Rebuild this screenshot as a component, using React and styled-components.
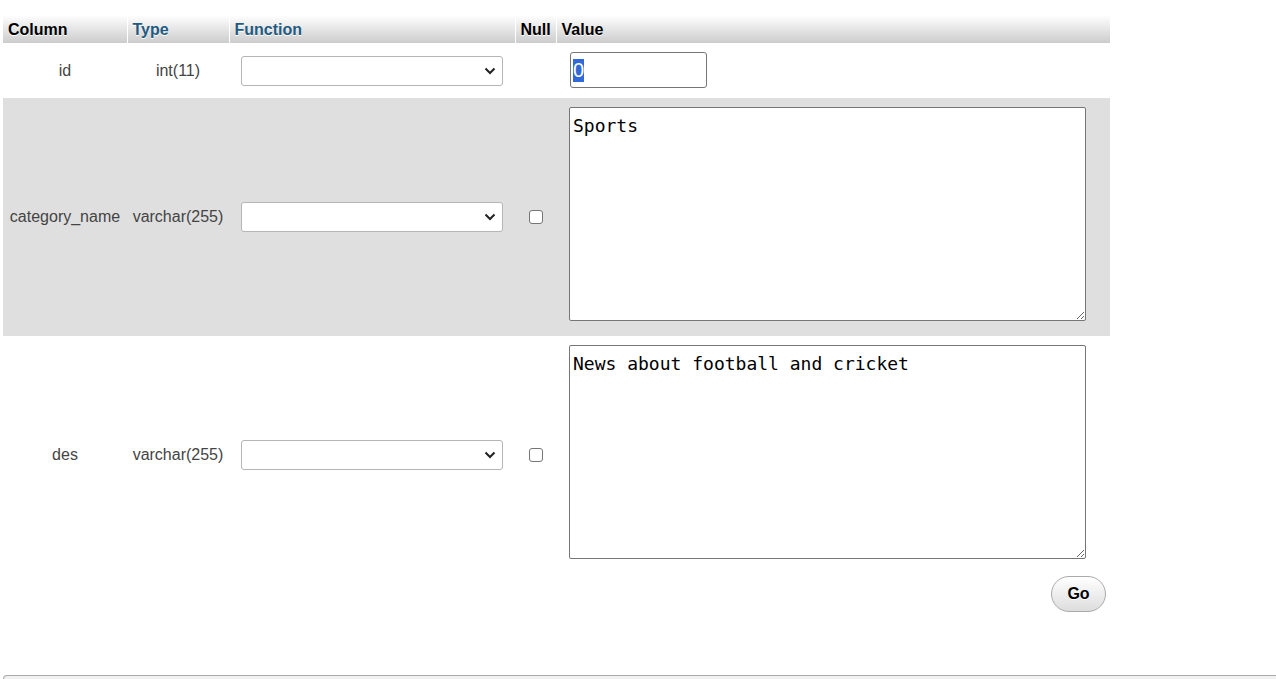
import React, { useEffect, useRef } from 'react';
import styled, { createGlobalStyle } from 'styled-components';

const GlobalStyle = createGlobalStyle`
  html, body {
    margin: 0;
    padding: 0;
    background: #fff;
    font-family: "Liberation Sans", Arial, sans-serif;
    font-size: 16px;
    color: #444;
  }
`;

const Page = styled.div`
  padding: 15px 0 0 3px;
  width: 1276px;
  height: 679px;
  box-sizing: border-box;
  overflow: hidden;
  display: flex;
  flex-direction: column;
`;

const Form = styled.div`
  width: 1107px;
  display: flex;
  flex-direction: column;
`;

const InsertTable = styled.table`
  border-collapse: collapse;
  table-layout: fixed;
  width: 1107px;
`;

const HeadCell = styled.th`
  width: ${(p) => p.$w}px;
  height: 28px;
  padding: 2px 5px 0;
  box-sizing: border-box;
  text-align: left;
  font-weight: bold;
  color: ${(p) => (p.$link ? '#235a81' : '#000')};
  background: linear-gradient(#fff, #ccc);
  border-left: ${(p) => (p.$first ? 'none' : '1px solid #fff')};
  text-shadow: 0 1px 0 #fff;
  white-space: nowrap;
`;

const Row = styled.tr`
  background: ${(p) => (p.$odd ? '#dfdfdf' : '#fff')};
`;

const Cell = styled.td`
  text-align: center;
  vertical-align: middle;
  padding: 0 5px;
  white-space: nowrap;
`;

const ValueCell = styled.td`
  vertical-align: top;
  padding: ${(p) => (p.$tall ? '9px 24px 15px 13px' : '9px 24px 10px 14px')};
`;

const FuncSelect = styled.select`
  width: 262px;
  height: 30px;
  border: 1px solid #b5b5b5;
  border-radius: 3px;
  background: #fff;
  font-family: inherit;
  font-size: 14px;
  color: #222;
  padding: 0 8px;
  appearance: none;
  background-image: url("data:image/svg+xml,%3Csvg xmlns='http://www.w3.org/2000/svg' width='12' height='8' viewBox='0 0 12 8'%3E%3Cpath d='M1.5 1.5 6 6l4.5-4.5' fill='none' stroke='%23222' stroke-width='2'/%3E%3C/svg%3E");
  background-repeat: no-repeat;
  background-position: right 6px center;
  display: block;
  margin: 0 auto;
`;

const NullBox = styled.input`
  width: 14px;
  height: 14px;
  margin: 0 auto;
  display: block;
  appearance: none;
  border: 1px solid #767676;
  border-radius: 3px;
  background: #fff;
  box-sizing: border-box;
`;

const NumberField = styled.input`
  display: block;
  width: 137px;
  height: 36px;
  box-sizing: border-box;
  border: 1px solid #767676;
  border-radius: 3px;
  padding: 1px 2px;
  font-family: "Liberation Sans", Arial, sans-serif;
  font-size: 20px;
  color: #000;
  outline: none;
  &::selection {
    background: #3169d8;
    color: #fff;
  }
`;

const ValueArea = styled.textarea`
  display: block;
  width: 517px;
  height: 214px;
  box-sizing: border-box;
  border: 1px solid #767676;
  border-radius: 2px;
  padding: 7px 3px 6px;
  resize: both;
  font-family: "DejaVu Sans Mono", "Liberation Mono", monospace;
  font-size: 18px;
  line-height: 22px;
  color: #000;
  background: #fff;
  outline: none;
`;

const Actions = styled.div`
  display: flex;
  justify-content: flex-end;
  padding: 2px 4px 0 0;
`;

const GoButton = styled.button`
  width: 55px;
  height: 36px;
  border: 1px solid #aaa;
  border-radius: 18px;
  background: linear-gradient(#fff, #ddd);
  font-family: "Liberation Sans", Arial, sans-serif;
  font-weight: bold;
  font-size: 16px;
  color: #000;
  text-shadow: 0 1px 0 #fff;
  cursor: pointer;
`;

const BottomFieldset = styled.div`
  margin-top: 63px;
  height: 20px;
  border: 1px solid #aaa;
  border-bottom: none;
  border-right: none;
  border-radius: 4px 0 0 0;
  background: #f1f1f1;
`;

const columns = [
  { name: 'id', type: 'int(11)', value: '0', kind: 'number' },
  { name: 'category_name', type: 'varchar(255)', value: 'Sports', kind: 'text', nullable: true },
  { name: 'des', type: 'varchar(255)', value: 'News about football and cricket', kind: 'text', nullable: true },
];

export default function App() {
  const idRef = useRef(null);

  useEffect(() => {
    if (idRef.current) {
      idRef.current.focus();
      idRef.current.select();
    }
  }, []);

  return (
    <>
      <GlobalStyle />
      <Page>
        <Form>
          <InsertTable>
            <thead>
              <tr>
                <HeadCell $w={124} $first>Column</HeadCell>
                <HeadCell $w={102} $link>Type</HeadCell>
                <HeadCell $w={286} $link>Function</HeadCell>
                <HeadCell $w={41}>Null</HeadCell>
                <HeadCell $w={554}>Value</HeadCell>
              </tr>
            </thead>
            <tbody>
              {columns.map((col, i) => (
                <Row key={col.name} $odd={i % 2 === 1}>
                  <Cell>{col.name}</Cell>
                  <Cell>{col.type}</Cell>
                  <Cell>
                    <FuncSelect defaultValue="">
                      <option value=""></option>
                    </FuncSelect>
                  </Cell>
                  <Cell>{col.nullable ? <NullBox type="checkbox" /> : null}</Cell>
                  <ValueCell $tall={col.kind === 'text'}>
                    {col.kind === 'number' ? (
                      <NumberField ref={idRef} defaultValue={col.value} />
                    ) : (
                      <ValueArea defaultValue={col.value} />
                    )}
                  </ValueCell>
                </Row>
              ))}
            </tbody>
          </InsertTable>
          <Actions>
            <GoButton>Go</GoButton>
          </Actions>
        </Form>
        <BottomFieldset />
      </Page>
    </>
  );
}
